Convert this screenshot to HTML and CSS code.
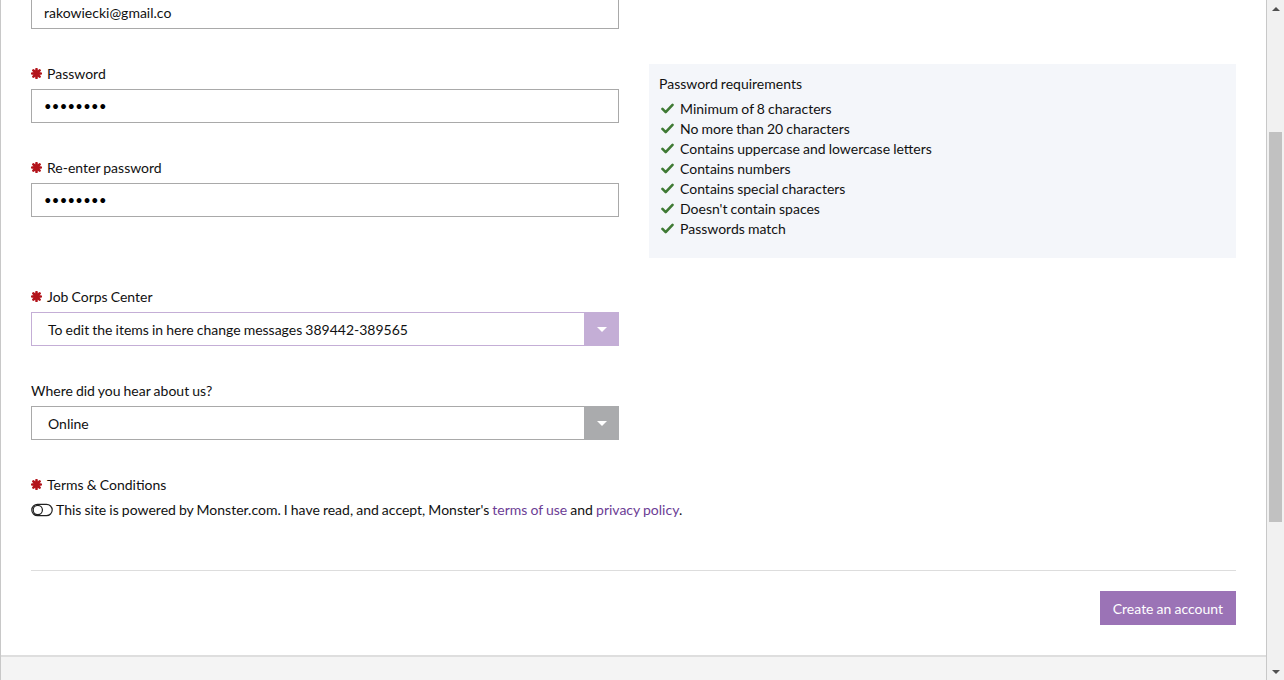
FILE: index.html
```html
<!DOCTYPE html>
<html lang="en">
<head>
<meta charset="utf-8">
<title>Create an account</title>
<link rel="stylesheet" href="styles.css">
</head>
<body>
<div class="page">
  <div class="content">
    <div class="input email">rakowiecki@gmail.co</div>

    <div class="row">
      <div class="col">
        <div class="group">
          <div class="label"><svg class="req" viewBox="0 0 12 12"><path d="M6 1.2V10.8M1.2 6H10.8M2.6 2.6L9.4 9.4M9.4 2.6L2.6 9.4"/></svg><span>Password</span></div>
          <div class="input dots">&#8226;&#8226;&#8226;&#8226;&#8226;&#8226;&#8226;&#8226;</div>
        </div>
        <div class="group">
          <div class="label"><svg class="req" viewBox="0 0 12 12"><path d="M6 1.2V10.8M1.2 6H10.8M2.6 2.6L9.4 9.4M9.4 2.6L2.6 9.4"/></svg><span>Re-enter password</span></div>
          <div class="input dots">&#8226;&#8226;&#8226;&#8226;&#8226;&#8226;&#8226;&#8226;</div>
        </div>
      </div>
      <div class="reqbox">
        <div class="reqtitle">Password requirements</div>
        <ul class="reqlist">
          <li><svg class="check" viewBox="0 0 14 12"><path d="M1.5 6.5L5 10L12.5 2"/></svg><span>Minimum of 8 characters</span></li>
          <li><svg class="check" viewBox="0 0 14 12"><path d="M1.5 6.5L5 10L12.5 2"/></svg><span>No more than 20 characters</span></li>
          <li><svg class="check" viewBox="0 0 14 12"><path d="M1.5 6.5L5 10L12.5 2"/></svg><span>Contains uppercase and lowercase letters</span></li>
          <li><svg class="check" viewBox="0 0 14 12"><path d="M1.5 6.5L5 10L12.5 2"/></svg><span>Contains numbers</span></li>
          <li><svg class="check" viewBox="0 0 14 12"><path d="M1.5 6.5L5 10L12.5 2"/></svg><span>Contains special characters</span></li>
          <li><svg class="check" viewBox="0 0 14 12"><path d="M1.5 6.5L5 10L12.5 2"/></svg><span>Doesn't contain spaces</span></li>
          <li><svg class="check" viewBox="0 0 14 12"><path d="M1.5 6.5L5 10L12.5 2"/></svg><span>Passwords match</span></li>
        </ul>
      </div>
    </div>

    <div class="group half">
      <div class="label"><svg class="req" viewBox="0 0 12 12"><path d="M6 1.2V10.8M1.2 6H10.8M2.6 2.6L9.4 9.4M9.4 2.6L2.6 9.4"/></svg><span>Job Corps Center</span></div>
      <div class="select purple"><span class="seltext">To edit the items in here change messages 389442-389565</span><span class="selarrow"><span class="tri"></span></span></div>
    </div>

    <div class="group half">
      <div class="label"><span>Where did you hear about us?</span></div>
      <div class="select gray"><span class="seltext">Online</span><span class="selarrow"><span class="tri"></span></span></div>
    </div>

    <div class="terms">
      <div class="label"><svg class="req" viewBox="0 0 12 12"><path d="M6 1.2V10.8M1.2 6H10.8M2.6 2.6L9.4 9.4M9.4 2.6L2.6 9.4"/></svg><span>Terms &amp; Conditions</span></div>
      <div class="termsline"><svg class="toggle" viewBox="0 0 22 14"><rect x="0.8" y="1.3" width="20.4" height="11.4" rx="5.7"/><circle cx="6.8" cy="7" r="4.6"/></svg><span>This site is powered by Monster.com. I have read, and accept, Monster's <a class="link">terms of use</a> and <a class="link">privacy policy</a>.</span></div>
    </div>

    <div class="divider"></div>
    <div class="actions"><button class="btn">Create an account</button></div>
  </div>
  <div class="footer"></div>
</div>
<div class="scrollbar">
  <div class="sbtn"><span class="up"></span></div>
  <div class="track"><div class="thumb"></div></div>
  <div class="sbtn"><span class="down"></span></div>
</div>
</body>
</html>
```

FILE: styles.css
```css
html, body {
  margin: 0;
  padding: 0;
}
body {
  display: flex;
  height: 680px;
  overflow: hidden;
  font-family: Lato, "Open Sans", sans-serif;
  font-size: 14px;
  word-spacing: -0.5px;
  color: #111;
  background: #fff;
}
.page {
  width: 1267px;
  display: flex;
  flex-direction: column;
  border-left: 1px solid #c8c8c8;
  border-right: 1px solid #c8c8c8;
  box-sizing: border-box;
}
.content {
  padding: 0 30px 30px 30px;
  background: #fff;
}
.footer {
  flex: 1;
  background: #f4f4f4;
  border-top: 2px solid #dedede;
}
.input {
  box-sizing: border-box;
  height: 34px;
  border: 1px solid #a9a9a9;
  padding-left: 12px;
  display: flex;
  align-items: center;
  font-size: 14px;
  color: #111;
  background: #fff;
}
.email {
  width: 588px;
  margin-top: -5px;
  margin-bottom: 35px;
}
.dots {
  font-size: 13px;
  letter-spacing: 0.3px;
  color: #000;
}
.row {
  display: grid;
  grid-template-columns: 588px 1fr;
  column-gap: 30px;
  align-items: start;
  margin-bottom: 29px;
}
.group {
  margin-bottom: 35px;
}
.col .group:last-child {
  margin-bottom: 0;
}
.half {
  width: 588px;
}
.label {
  height: 20px;
  display: flex;
  align-items: flex-start;
  gap: 5px;
  margin-bottom: 5px;
  font-size: 14px;
  color: #111;
}
.label span {
  line-height: 19px;
}
.req {
  align-self: center;
  width: 11px;
  height: 11px;
  margin-top: -1px;
  fill: none;
  stroke: #b3141b;
  stroke-width: 2.8;
  stroke-linecap: round;
}
.reqbox {
  background: #f4f6fa;
  padding: 10px 10px 19px 10px;
}
.reqtitle {
  height: 20px;
  line-height: 19px;
  margin-bottom: 5px;
  font-size: 14px;
  color: #111;
}
.reqlist {
  list-style: none;
  margin: 0;
  padding: 0;
}
.reqlist li {
  display: flex;
  align-items: flex-start;
  height: 20px;
  gap: 6px;
  padding-left: 2px;
  font-size: 14px;
  color: #111;
}
.reqlist li span {
  line-height: 19px;
}
.check {
  align-self: center;
  margin-top: -1px;
  width: 13px;
  height: 11px;
  fill: none;
  stroke: #3f7a34;
  stroke-width: 2.8;
  stroke-linecap: round;
  stroke-linejoin: round;
}
.select {
  box-sizing: border-box;
  height: 34px;
  display: flex;
  align-items: stretch;
  border: 1px solid #a9a9a9;
  background: #fff;
}
.select.purple {
  border-color: #c4aed6;
}
.seltext {
  flex: 1;
  display: flex;
  align-items: center;
  padding-left: 16px;
  font-size: 14px;
  color: #111;
}
.selarrow {
  width: 35px;
  display: flex;
  align-items: center;
  justify-content: center;
  margin: -1px -1px -1px 0;
}
.purple .selarrow {
  background: #c4aed6;
}
.gray .selarrow {
  background: #aaabad;
}
.tri {
  width: 0;
  height: 0;
  border-left: 5px solid transparent;
  border-right: 5px solid transparent;
  border-top: 5px solid #fff;
}
.termsline {
  height: 20px;
  display: flex;
  align-items: flex-start;
  gap: 3px;
  font-size: 14px;
  color: #111;
}
.termsline span {
  line-height: 19px;
}
.toggle {
  align-self: center;
  margin-top: -1px;
  width: 22px;
  height: 14px;
  fill: none;
  stroke: #222;
  stroke-width: 1.2;
}
.link {
  color: #6c3d95;
  text-decoration: none;
}
.divider {
  margin-top: 50px;
  height: 1px;
  background: #dddddd;
}
.actions {
  display: flex;
  justify-content: flex-end;
  margin-top: 20px;
}
.btn {
  height: 34px;
  padding: 0 13px;
  border: 0;
  background: #9b73b6;
  color: #fff;
  font-family: Lato, "Open Sans", sans-serif;
  font-size: 14px;
  word-spacing: -0.5px;
}
.scrollbar {
  width: 17px;
  display: flex;
  flex-direction: column;
  background: #f1f1f1;
}
.sbtn {
  height: 17px;
  display: flex;
  align-items: center;
  justify-content: center;
}
.up {
  width: 0;
  height: 0;
  border-left: 4px solid transparent;
  border-right: 4px solid transparent;
  border-bottom: 4px solid #505050;
}
.down {
  width: 0;
  height: 0;
  border-left: 4px solid transparent;
  border-right: 4px solid transparent;
  border-top: 4px solid #505050;
}
.track {
  flex: 1;
}
.thumb {
  margin: 115px 2px 0 2px;
  height: 390px;
  background: #c1c1c1;
}
```
